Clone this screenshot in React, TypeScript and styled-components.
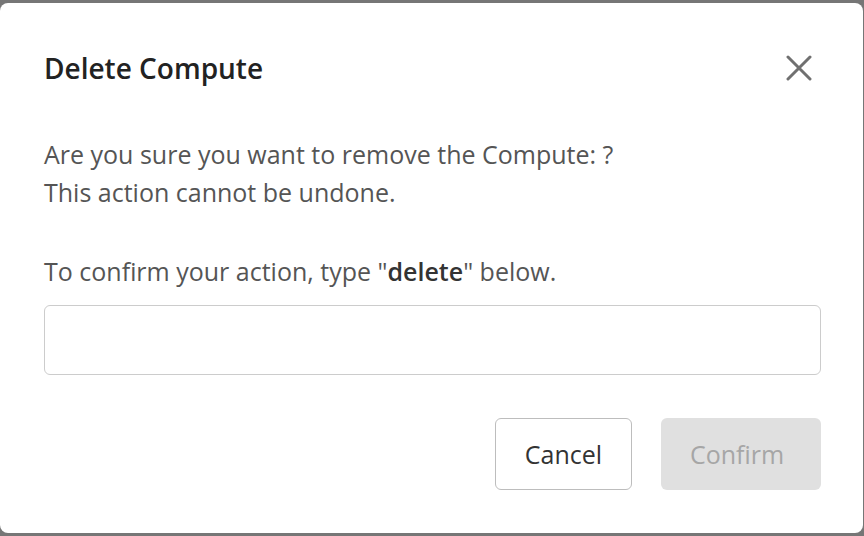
import React from "react";
import styled, { createGlobalStyle } from "styled-components";

const Global = createGlobalStyle`
  html, body { margin: 0; padding: 0; }
  body {
    background: #767676;
    font-family: "Open Sans", "Noto Sans", sans-serif;
    -webkit-font-smoothing: antialiased;
  }
`;

const Page = styled.div`
  width: 864px;
  height: 536px;
  padding-top: 3px;
  box-sizing: border-box;
  overflow: hidden;
`;

const Modal = styled.div`
  width: 863px;
  height: 530px;
  box-sizing: border-box;
  background: #ffffff;
  border-radius: 8px;
  padding: 46px 42px 0 44px;
  display: flex;
  flex-direction: column;
`;

const Header = styled.div`
  display: flex;
  align-items: center;
  justify-content: space-between;
  height: 38px;
`;

const Title = styled.h2`
  margin: 0;
  font-size: 28px;
  line-height: 38px;
  font-weight: 600;
  color: #222222;
`;

const CloseButton = styled.button`
  width: 30px;
  height: 30px;
  margin-right: 7px;
  padding: 0;
  border: none;
  background: transparent;
  display: flex;
  align-items: center;
  justify-content: center;
  cursor: pointer;
`;

const Text = styled.p<{ $top: number }>`
  margin: ${(p) => p.$top}px 0 0;
  font-size: 25px;
  line-height: 38px;
  color: #555555;
`;

const Strong = styled.strong`
  font-weight: 600;
  color: #333333;
`;

const Input = styled.input`
  margin-top: 15px;
  height: 70px;
  width: 100%;
  box-sizing: border-box;
  border: 1px solid #cccccc;
  border-radius: 6px;
  padding: 0 16px;
  font-family: inherit;
  font-size: 25px;
  color: #333;
  outline: none;
`;

const Footer = styled.div`
  margin-top: 43px;
  display: flex;
  justify-content: flex-end;
  gap: 29px;
`;

const Button = styled.button<{ $primary?: boolean }>`
  height: 72px;
  padding: ${(p) => (p.$primary ? "0 8px 0 0" : "0")};
  width: ${(p) => (p.$primary ? "160px" : "137px")};
  box-sizing: border-box;
  border-radius: 6px;
  font-family: inherit;
  font-size: 25px;
  border: ${(p) => (p.$primary ? "none" : "1px solid #bdbdbd")};
  background: ${(p) => (p.$primary ? "#e0e0e0" : "#ffffff")};
  color: ${(p) => (p.$primary ? "#a6a6a6" : "#333333")};
  cursor: ${(p) => (p.$primary ? "not-allowed" : "pointer")};
`;

export default function App() {
  return (
    <Page>
      <Global />
      <Modal>
        <Header>
          <Title>Delete Compute</Title>
          <CloseButton aria-label="Close">
            <svg width="26" height="26" viewBox="0 0 26 26">
              <path
                d="M2 2 L24 24 M24 2 L2 24"
                stroke="#707070"
                strokeWidth="3"
                strokeLinecap="round"
              />
            </svg>
          </CloseButton>
        </Header>
        <Text $top={48}>
          Are you sure you want to remove the Compute: ?
          <br />
          This action cannot be undone.
        </Text>
        <Text $top={41}>
          To confirm your action, type "<Strong>delete</Strong>" below.
        </Text>
        <Input type="text" />
        <Footer>
          <Button>Cancel</Button>
          <Button $primary disabled>
            Confirm
          </Button>
        </Footer>
      </Modal>
    </Page>
  );
}
